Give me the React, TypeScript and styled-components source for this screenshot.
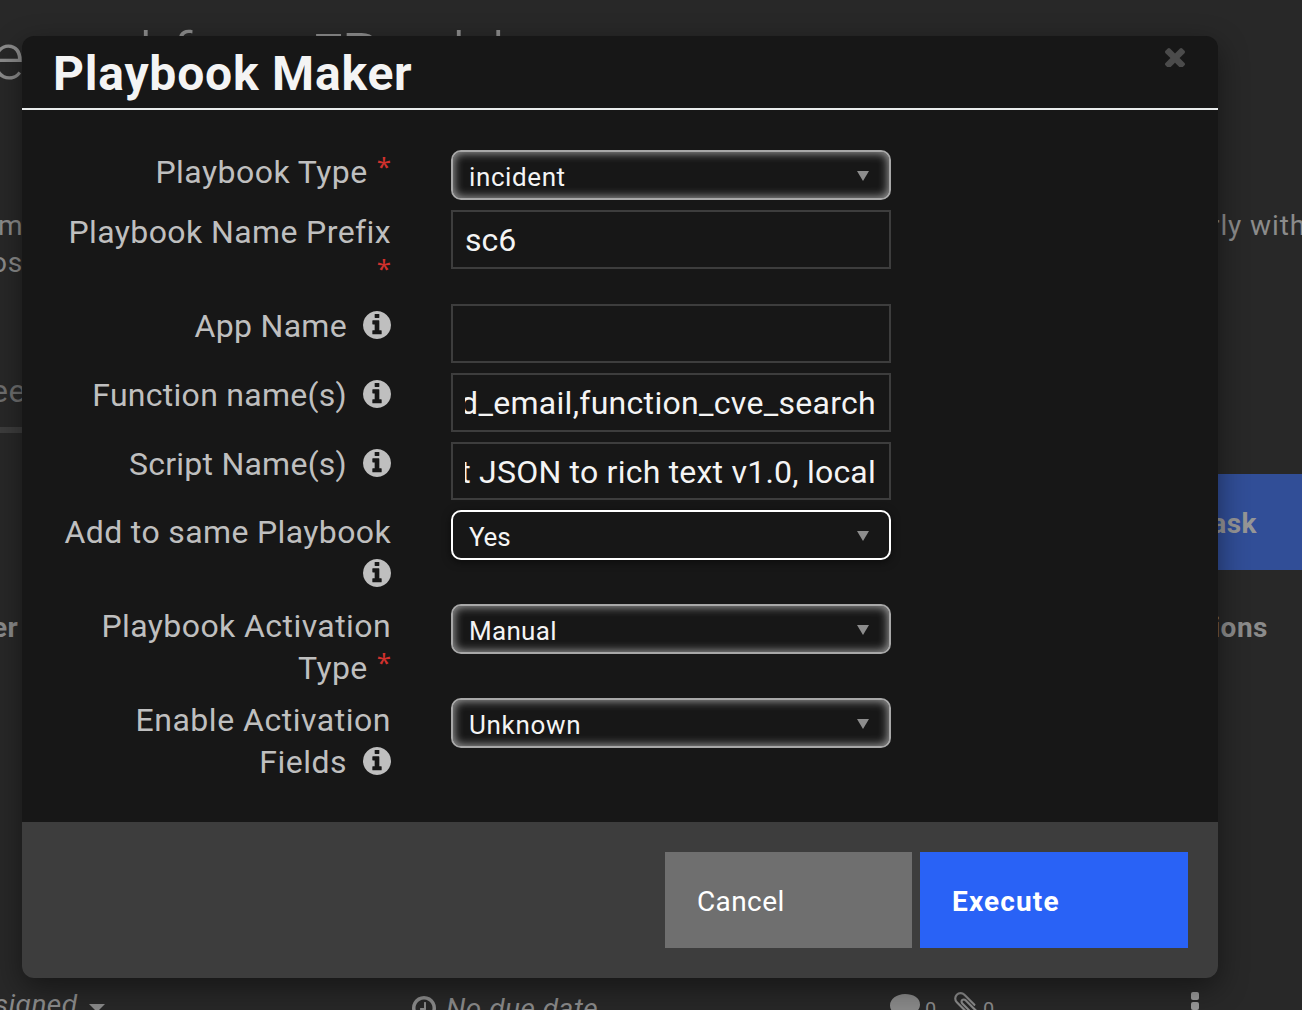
import React from "react";
import styled, { createGlobalStyle, css } from "styled-components";

const GlobalStyle = createGlobalStyle`
  *, *::before, *::after { box-sizing: border-box; }
  html, body { margin: 0; background: #282828; }
  body { font-family: Roboto, "Noto Sans", sans-serif; overflow: hidden; }
`;

/* ---------- page behind the dialog ---------- */

const Page = styled.div`
  position: relative;
  width: 1302px;
  height: 1010px;
  overflow: hidden;
  display: flex;
  flex-direction: column;
  background: #282828;
  color: #8b8b8b;
  font-size: 28px;
`;

const PageTitle = styled.header`
  flex: none;
  height: 207px;
  padding-top: 17px;
  display: flex;
  font-size: 64px;
  line-height: 82px;
  font-weight: 300;
  white-space: nowrap;
`;

const TitleWord = styled.span<{ $width: number; $shift?: number; $serif?: boolean }>`
  flex: none;
  width: ${(p) => p.$width}px;
  text-indent: ${(p) => p.$shift ?? 0}px;
  ${(p) =>
    p.$serif &&
    css`
      font-family: "Liberation Mono", monospace;
      font-size: 62px;
    `}
`;

const Description = styled.div`
  flex: none;
  height: 160px;
  display: flex;
  justify-content: space-between;
  line-height: 37px;
`;

const TextColumn = styled.div<{ $right?: boolean }>`
  display: flex;
  flex-direction: column;
  width: ${(p) => (p.$right ? 92 : 120)}px;
  white-space: nowrap;
  letter-spacing: 0.9px;
`;

const TextLine = styled.span<{ $pull?: number }>`
  margin-left: ${(p) => p.$pull ?? 0}px;
`;

const TabStrip = styled.div`
  flex: none;
  height: 66px;
  width: 200px;
  border-bottom: 6px solid #3d3d3d;
  font-size: 32px;
  line-height: 48px;
  color: #6f6f6f;
  letter-spacing: 0.5px;
  text-indent: -9px;
`;

const ActionBar = styled.div`
  flex: none;
  height: 137px;
  padding-top: 41px;
  display: flex;
  justify-content: flex-end;
`;

const AddTask = styled.div`
  width: 200px;
  height: 96px;
  padding-right: 45px;
  background: #314e97;
  color: #969696;
  font-weight: 700;
  line-height: 99px;
  letter-spacing: 0.5px;
  text-align: right;
`;

const TableHead = styled.div`
  flex: none;
  height: 422px;
  padding: 38px 34px 0 0;
  display: flex;
  justify-content: space-between;
  font-weight: 700;
  line-height: 40px;
  letter-spacing: 0.5px;
`;

const HeadCell = styled.span<{ $pull?: number }>`
  margin-left: ${(p) => p.$pull ?? 0}px;
`;

const TaskRow = styled.div`
  flex: none;
  height: 40px;
  display: flex;
  align-items: flex-start;
  font-style: italic;
  line-height: 34px;
  letter-spacing: 0.5px;
  white-space: nowrap;
`;

const Owner = styled.div`
  width: 412px;
  display: flex;
  gap: 11px;
  margin-left: -6px;
  margin-right: 6px;
  margin-top: -4px;
`;

const Caret = styled.i`
  margin-top: 16px;
  width: 0;
  height: 0;
  border: 8px solid transparent;
  border-top-color: #8b8b8b;
  border-bottom: 0;
`;

const DueDate = styled.div`
  width: 478px;
  display: flex;
  gap: 10px;
`;

const Counts = styled.div`
  width: 301px;
  display: flex;
  font-style: normal;
  font-size: 20px;
  line-height: 36px;
`;

const Count = styled.span`
  width: 12px;
  margin: 0 17px 0 5px;
`;

const Dots = styled.div`
  display: flex;
  flex-direction: column;
  gap: 2px;
`;

const Dot = styled.i`
  width: 8px;
  height: 8px;
  border-radius: 2px;
  background: #9a9a9a;
`;

const Glyph = styled.svg<{ $top?: number }>`
  flex: none;
  display: block;
  margin-top: ${(p) => p.$top ?? 0}px;
  fill: currentColor;
`;

/* ---------- dialog ---------- */

const Dialog = styled.section`
  position: absolute;
  left: 22px;
  top: 36px;
  width: 1196px;
  height: 942px;
  display: flex;
  flex-direction: column;
  border-radius: 12px;
  background: #171717;
  box-shadow: 0 10px 30px rgba(0, 0, 0, 0.45);
`;

const DialogHeader = styled.div`
  flex: none;
  height: 74px;
  padding: 0 33px 0 31px;
  display: flex;
  justify-content: space-between;
  border-bottom: 2px solid #e9ecec;
`;

const DialogTitle = styled.h3`
  margin: 0;
  font-size: 48px;
  line-height: 75px;
  height: 72px;
  font-weight: 700;
  letter-spacing: 0.8px;
  color: #f4f4f4;
`;

const CloseButton = styled.button`
  width: 20px;
  height: 20px;
  margin-top: 11px;
  padding: 0;
  border: 0;
  background: none;
  color: #4b4b4b;
`;

const DialogBody = styled.div`
  flex: 1;
  padding-top: 40px;
`;

const FormRow = styled.div<{ $height: number }>`
  height: ${(p) => p.$height}px;
  margin-bottom: 10px;
  display: grid;
  grid-template-columns: 369px 440px;
  column-gap: 60px;
  align-items: start;
`;

const Label = styled.label`
  display: flex;
  flex-direction: column;
  align-items: flex-end;
  padding-top: 1px;
  font-size: 32px;
  line-height: 42px;
  color: #bfbfbf;
  white-space: nowrap;
`;

const LabelLine = styled.span<{ $tracking?: number }>`
  display: flex;
  height: 42px;
  letter-spacing: ${(p) => p.$tracking ?? 0.5}px;
`;

const Required = styled.span`
  margin-left: 9px;
  font-family: "Noto Sans", sans-serif;
  font-size: 26px;
  line-height: 30px;
  letter-spacing: 0;
  color: #d0312d;
`;

const InfoSlot = styled.span`
  width: 28px;
  margin-left: 16px;
  padding-top: 6px;
`;

const TextField = styled.div<{ $height: number }>`
  height: ${(p) => p.$height}px;
  border: 2px solid #3d3d3d;
  padding: 0 13px 0 12px;
  font-size: 32px;
  line-height: 56px;
  color: #f4f4f4;
`;

const FieldValue = styled.div<{ $scrolled?: boolean; $tracking?: number }>`
  display: flex;
  justify-content: ${(p) => (p.$scrolled ? "flex-end" : "flex-start")};
  overflow: hidden;
  white-space: pre;
  letter-spacing: ${(p) => p.$tracking ?? 0}px;
`;

const Select = styled.div<{ $active?: boolean; $tracking?: number }>`
  height: 50px;
  padding: 3px 20px 0 16px;
  display: flex;
  justify-content: space-between;
  border: 2px solid #a8a8a8;
  border-radius: 10px;
  box-shadow: inset 0 0 10px 1px #a0a0a0;
  font-size: 26px;
  line-height: 44px;
  letter-spacing: ${(p) => p.$tracking ?? 0.5}px;
  color: #f4f4f4;
  ${(p) =>
    p.$active &&
    css`
      border-color: #ffffff;
      box-shadow: 0 2px 8px rgba(0, 0, 0, 0.55);
    `}
`;

const SelectArrow = styled.i`
  width: 0;
  height: 0;
  margin-top: 16px;
  border: 6px solid transparent;
  border-top: 10px solid #8d8d8d;
  border-bottom: 0;
`;

const DialogFooter = styled.div`
  flex: none;
  height: 156px;
  padding: 30px;
  display: flex;
  justify-content: flex-end;
  gap: 8px;
  border-radius: 0 0 12px 12px;
  background: #3d3d3d;
`;

const FooterButton = styled.button<{ $primary?: boolean }>`
  width: ${(p) => (p.$primary ? 268 : 247)}px;
  height: 96px;
  padding: 2px 32px 0;
  border: 0;
  background: ${(p) => (p.$primary ? "#2962f6" : "#6f6f6f")};
  color: #ffffff;
  font-family: inherit;
  font-size: 28px;
  font-weight: ${(p) => (p.$primary ? 700 : 400)};
  letter-spacing: ${(p) => (p.$primary ? 1.15 : 0.4)}px;
  text-align: left;
`;

const CIRCLE =
  "q0 209-103 385.5t-279.5 279.5-385.5 103-385.5-103-279.5-279.5-103-385.5 103-385.5 279.5-279.5 385.5-103 385.5 103 279.5 279.5 103 385.5z";

const InfoIcon = () => (
  <InfoSlot>
    <Glyph width="28" height="28" viewBox="128 128 1536 1536">
      <path
        d={
          "M1152 1376v-160q0-14-9-23t-23-9h-96v-512q0-14-9-23t-23-9h-320q-14 0-23 9t-9 23v160q0 14 9 23t23 9h96v320h-96q-14 0-23 9t-9 23v160q0 14 9 23t23 9h448q14 0 23-9t9-23zm-128-896v-160q0-14-9-23t-23-9h-192q-14 0-23 9t-9 23v160q0 14 9 23t23 9h192q14 0 23-9t9-23zm640 416" +
          CIRCLE
        }
      />
    </Glyph>
  </InfoSlot>
);

const CloseIcon = () => (
  <Glyph width="20" height="20" viewBox="302 302 1188 1188">
    <path d="M1490 1322q0 40-28 68l-136 136q-28 28-68 28t-68-28l-294-294-294 294q-28 28-68 28t-68-28l-136-136q-28-28-28-68t28-68l294-294-294-294q-28-28-28-68t28-68l136-136q28-28 68-28t68 28l294 294 294-294q28-28 68-28t68 28l136 136q28 28 28 68t-28 68l-294 294 294 294q28 28 28 68z" />
  </Glyph>
);

const ClockIcon = () => (
  <Glyph $top={4} width="24" height="24" viewBox="128 128 1536 1536">
    <path
      d={
        "M1024 544v448q0 14-9 23t-23 9h-320q-14 0-23-9t-9-23v-64q0-14 9-23t23-9h224v-352q0-14 9-23t23-9h64q14 0 23 9t9 23zm416 352q0-148-73-273t-198-198-273-73-273 73-198 198-73 273 73 273 198 198 273 73 273-73 198-198 73-273zm224 0" +
        CIRCLE
      }
    />
  </Glyph>
);

const CommentIcon = () => (
  <Glyph $top={2} width="30" height="28" viewBox="0 0 30 28">
    <path d="M15 0C6.700 0 0 5.100 0 11.400c0 3.600 2.200 6.800 5.700 8.900-.6 2.200-1.700 3.500-3.200 4.900 3.700-.4 6.700-1.700 9-3.700 1.100.2 2.300.3 3.500.3 8.300 0 15-5 15-11.400S23.300 0 15 0z" />
  </Glyph>
);

const ClipIcon = () => (
  <Glyph width="24" height="26" viewBox="192 128 1408 1538">
    <path d="M1596 1385q0 117-79 196t-196 79q-135 0-235-100l-777-776q-113-115-113-271 0-159 110-270t269-111q158 0 273 113l605 606q10 10 10 22 0 16-30.500 46.500t-46.500 30.500q-13 0-23-10l-606-607q-79-77-181-77-106 0-179 75t-73 181q0 105 76 181l776 777q63 63 145 63 64 0 106-42t42-106q0-82-63-145l-581-581q-26-24-60-24-29 0-48 19t-19 48q0 32 25 59l410 410q10 10 10 22 0 16-31 47t-47 31q-12 0-22-10l-410-410q-63-61-63-149 0-82 57-139t139-57q88 0 149 63l581 581q100 98 100 235z" />
  </Glyph>
);

type Line = { text?: string; tracking?: number; mark?: "required" | "info" };
type Field = {
  height: number;
  lines: Line[];
  value: string;
  kind: "select" | "text";
  tracking?: number;
  scrolled?: boolean;
  active?: boolean;
};

const FIELDS: Field[] = [
  { height: 50, kind: "select", value: "incident", tracking: 0.6, lines: [{ text: "Playbook Type", tracking: 0.45, mark: "required" }] },
  { height: 84, kind: "text", value: "sc6", tracking: 0, lines: [{ text: "Playbook Name Prefix", tracking: 0.4 }, { mark: "required" }] },
  { height: 59, kind: "text", value: "", lines: [{ text: "App Name", tracking: 0.3, mark: "info" }] },
  { height: 59, kind: "text", value: "send_email,function_cve_search", tracking: 0.3, scrolled: true, lines: [{ text: "Function name(s)", tracking: 0.28, mark: "info" }] },
  { height: 58, kind: "text", value: "Convert JSON to rich text v1.0, local", tracking: 0.22, scrolled: true, lines: [{ text: "Script Name(s)", tracking: 0.25, mark: "info" }] },
  { height: 84, kind: "select", value: "Yes", tracking: -0.2, active: true, lines: [{ text: "Add to same Playbook", tracking: 0.37 }, { mark: "info" }] },
  { height: 84, kind: "select", value: "Manual", tracking: 0.3, lines: [{ text: "Playbook Activation", tracking: 0.42 }, { text: "Type", tracking: 0.4, mark: "required" }] },
  { height: 84, kind: "select", value: "Unknown", tracking: 0.7, lines: [{ text: "Enable Activation", tracking: 0.52 }, { text: "Fields", tracking: 0.5, mark: "info" }] },
];

const FormField = ({ field }: { field: Field }) => (
  <FormRow $height={field.height}>
    <Label>
      {field.lines.map((line, i) => (
        <LabelLine key={i} $tracking={line.tracking}>
          {line.text}
          {line.mark === "required" && <Required>*</Required>}
          {line.mark === "info" && <InfoIcon />}
        </LabelLine>
      ))}
    </Label>
    {field.kind === "select" ? (
      <Select $active={field.active} $tracking={field.tracking}>
        {field.value}
        <SelectArrow />
      </Select>
    ) : (
      <TextField $height={Math.min(field.height, 59)}>
        <FieldValue $scrolled={field.scrolled} $tracking={field.tracking}>
          {field.value}
        </FieldValue>
      </TextField>
    )}
  </FormRow>
);

export default function App() {
  return (
    <>
      <GlobalStyle />
      <Page>
        <PageTitle>
          <TitleWord $width={117} $shift={-9}>e</TitleWord>
          <TitleWord $width={54}>d</TitleWord>
          <TitleWord $width={139}>for</TitleWord>
          <TitleWord $width={31} $serif>I</TitleWord>
          <TitleWord $width={89}>R</TitleWord>
          <TitleWord $width={61}>d</TitleWord>
          <TitleWord $width={30}>l</TitleWord>
        </PageTitle>
        <Description>
          <TextColumn>
            <TextLine $pull={-2}>m</TextLine>
            <TextLine $pull={-9}>ose</TextLine>
          </TextColumn>
          <TextColumn $right>
            <TextLine>rly with</TextLine>
          </TextColumn>
        </Description>
        <TabStrip>ees</TabStrip>
        <ActionBar>
          <AddTask>Add Task</AddTask>
        </ActionBar>
        <TableHead>
          <HeadCell $pull={-8}>er</HeadCell>
          <HeadCell>Actions</HeadCell>
        </TableHead>
        <TaskRow>
          <Owner>signed<Caret /></Owner>
          <DueDate><ClockIcon />No due date</DueDate>
          <Counts>
            <CommentIcon /><Count>0</Count>
            <ClipIcon /><Count>0</Count>
          </Counts>
          <Dots><Dot /><Dot /><Dot /></Dots>
        </TaskRow>
        <Dialog>
          <DialogHeader>
            <DialogTitle>Playbook Maker</DialogTitle>
            <CloseButton aria-label="Close"><CloseIcon /></CloseButton>
          </DialogHeader>
          <DialogBody>
            {FIELDS.map((field) => (
              <FormField key={field.lines[0].text} field={field} />
            ))}
          </DialogBody>
          <DialogFooter>
            <FooterButton>Cancel</FooterButton>
            <FooterButton $primary>Execute</FooterButton>
          </DialogFooter>
        </Dialog>
      </Page>
    </>
  );
}
